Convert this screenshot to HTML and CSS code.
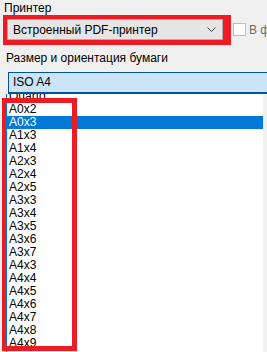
FILE: index.html
```html
<!DOCTYPE html>
<html lang="ru">
<head>
  <meta charset="UTF-8" />
  <title>Печать</title>
  <link rel="stylesheet" href="styles.css">
</head>
<body>

  <!-- Printer group -->
  <div class="group-label printer-label">Принтер</div>
  <div class="printer-row">
    <div class="combo">
      <span class="combo-text">Встроенный PDF-принтер</span>
      <svg class="chevron" width="9" height="6" viewBox="0 0 9 6">
        <polyline points="0.5,0.5 4.5,4.5 8.5,0.5" fill="none" stroke="#444" stroke-width="1"/>
      </svg>
    </div>
    <span class="check"></span>
    <span class="check-label">В файл</span>
  </div>

  <!-- Paper group -->
  <div class="group-label paper-label">Размер и ориентация бумаги</div>
  <div class="paper-box">ISO A4</div>

  <div class="dropdown">
    <div class="dropdown-items">
      <div class="item">Quarto</div>
      <div class="item">A0x2</div>
      <div class="item selected">A0x3</div>
      <div class="item">A1x3</div>
      <div class="item">A1x4</div>
      <div class="item">A2x3</div>
      <div class="item">A2x4</div>
      <div class="item">A2x5</div>
      <div class="item">A3x3</div>
      <div class="item">A3x4</div>
      <div class="item">A3x5</div>
      <div class="item">A3x6</div>
      <div class="item">A3x7</div>
      <div class="item">A4x3</div>
      <div class="item">A4x4</div>
      <div class="item">A4x5</div>
      <div class="item">A4x6</div>
      <div class="item">A4x7</div>
      <div class="item">A4x8</div>
      <div class="item">A4x9</div>
    </div>
  </div>

  <!-- red annotation frames -->
  <div class="mark mark-printer"></div>
  <div class="mark mark-list"></div>

</body>
</html>
```

FILE: styles.css
```css
body {
  font-family: 'Liberation Sans', Arial, sans-serif;
  font-size: 12px;
  color: #000;
  background: #f0f0f0;
  margin: 0;
  padding: 0;
  width: 267px;
  height: 352px;
  overflow: hidden;
  position: relative;
}

.group-label {
  height: 14px;
  line-height: 14px;
  white-space: nowrap;
}

.printer-label {
  padding: 1px 0 0 4px;
}

.printer-row {
  display: flex;
  align-items: center;
  margin-top: 4px;
  padding-left: 7px;
  height: 21px;
  overflow: hidden;
}

.combo {
  flex-shrink: 0;
  display: flex;
  align-items: center;
  justify-content: space-between;
  box-sizing: border-box;
  width: 216px;
  height: 21px;
  padding: 1px 6px 0 5px;
  background: #e5e5e5;
  border: 1px solid #adadad;
}

.combo-text {
  white-space: nowrap;
}

.chevron {
  display: block;
}

.check {
  flex-shrink: 0;
  box-sizing: border-box;
  width: 13px;
  height: 13px;
  margin-left: 10px;
  background: #fff;
  border: 1px solid #bcbcbc;
}

.check-label {
  flex-shrink: 0;
  margin-left: 3px;
  color: #6d6d6d;
  white-space: nowrap;
}

.paper-label {
  margin-top: 11px;
  padding-left: 6px;
}

.paper-box {
  box-sizing: border-box;
  margin: 7px 0 0 8px;
  height: 22px;
  line-height: 19px;
  padding-left: 4px;
  background: #cce4f7;
  border-top: 1px solid #005499;
  border-left: 1px solid #005499;
  border-bottom: 2px solid #005499;
}

.dropdown {
  margin: 0 4px 0 6px;
  height: 258px;
  overflow: hidden;
  background: #fff;
  border-left: 1px solid #0078d7;
}

.dropdown-items {
  margin-top: -4px;
}

.item {
  height: 13px;
  line-height: 13px;
  padding-left: 2px;
  color: #000;
}

.item.selected {
  background: #0078d7;
  color: #fff;
}

.mark {
  position: absolute;
  border: solid #ed1c24;
  box-sizing: border-box;
}

.mark-printer {
  left: 3px;
  top: 15px;
  width: 228px;
  height: 30px;
  border-width: 4px 8px 5px 4px;
}

.mark-list {
  left: 2px;
  top: 98px;
  width: 75px;
  height: 253px;
  border-width: 5px 5px 5px 4px;
}
```
